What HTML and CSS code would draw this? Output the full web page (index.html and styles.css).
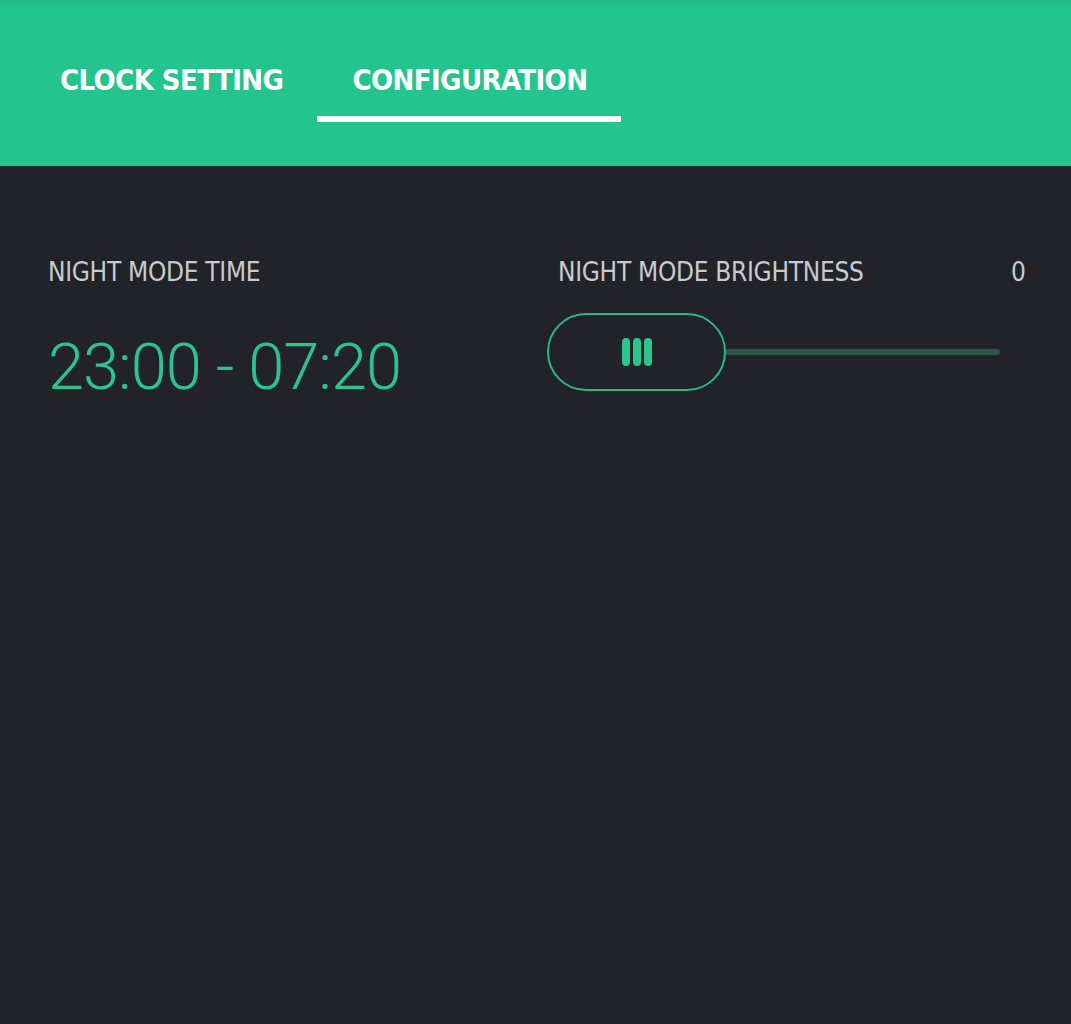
FILE: index.html
```html
<!DOCTYPE html>
<html>
<head>
<meta charset="utf-8">
<link rel="stylesheet" href="styles.css">
</head>
<body>
<header class="tabs">
  <div class="tab">CLOCK SETTING</div>
  <div class="tab active">CONFIGURATION</div>
</header>
<main class="content">
  <section class="col left">
    <div class="label">NIGHT MODE TIME</div>
    <div class="time">23:00 - 07:20</div>
  </section>
  <section class="col right">
    <div class="label-row">
      <div class="label">NIGHT MODE BRIGHTNESS</div>
      <div class="value">0</div>
    </div>
    <div class="slider">
      <div class="thumb">
        <span class="grip"></span><span class="grip"></span><span class="grip"></span>
      </div>
      <div class="track"></div>
    </div>
  </section>
</main>
</body>
</html>
```

FILE: styles.css
```css
html, body {
  margin: 0;
  padding: 0;
  background: #212328;
  height: 100%;
}
body {
  font-family: "DejaVu Sans Condensed", "Roboto", sans-serif;
}
.tabs {
  height: 166px;
  background: linear-gradient(#20b584 0, #24c48f 6px, #24c48f 100%);
  display: flex;
  padding-left: 25px;
  box-sizing: border-box;
}
.tab {
  padding: 63px 34px 0 35px;
  height: 122px;
  box-sizing: border-box;
  color: #fff;
  font-weight: bold;
  font-size: 29px;
  letter-spacing: -0.6px;
  line-height: 34px;
}
.tab.active {
  border-bottom: 6px solid #fff;
}
.content {
  display: flex;
  padding: 90px 0 0 48px;
}
.col.left {
  width: 499px;
}
.col.right {
  width: 479px;
}
.label {
  color: #c9cacf;
  font-size: 26px;
  line-height: 32px;
  letter-spacing: -0.3px;
}
.label-row {
  display: flex;
  justify-content: space-between;
  padding-left: 11px;
}
.value {
  color: #c9cacf;
  font-size: 26px;
  line-height: 32px;
}
.time {
  margin-top: 39px;
  color: #2bc48f;
  font-size: 65px;
  font-weight: 300;
  line-height: 80px;
  font-family: "Roboto", sans-serif;
  letter-spacing: -1px;
}
.slider {
  display: flex;
  align-items: center;
  margin-top: 25px;
}
.thumb {
  width: 179px;
  height: 78px;
  box-sizing: border-box;
  border: 2px solid #29b784;
  border-radius: 39px;
  display: flex;
  justify-content: center;
  align-items: center;
  gap: 3px;
}
.grip {
  width: 8px;
  height: 28px;
  border-radius: 4px;
  background: #2bc48f;
}
.track {
  width: 274px;
  height: 6px;
  background: #2b5648;
  border-radius: 0 3px 3px 0;
}
```
